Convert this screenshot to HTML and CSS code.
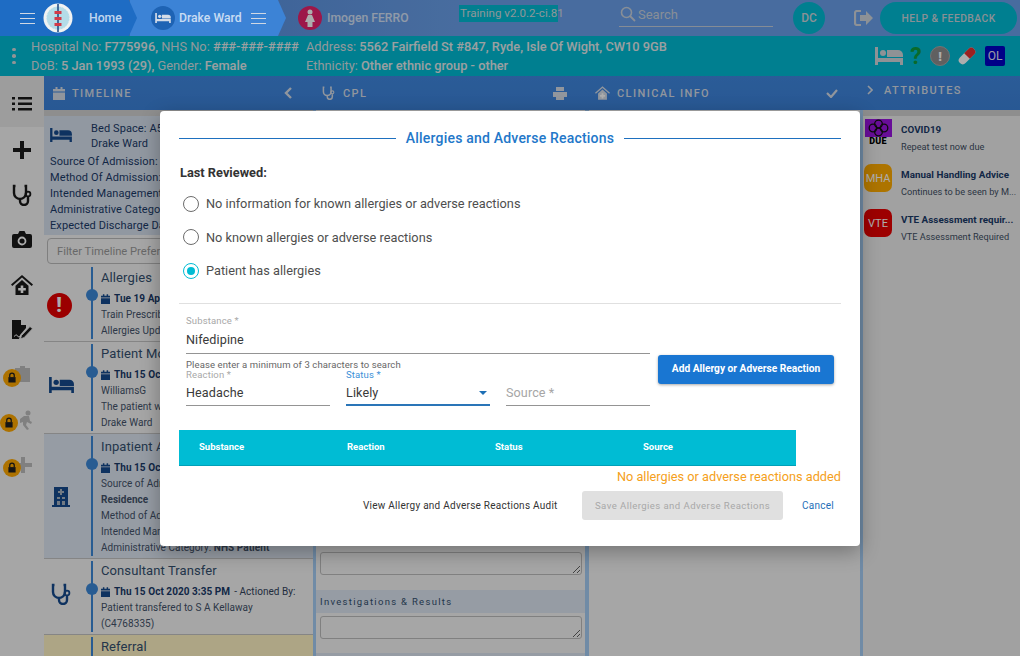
FILE: index.html
```html
<!DOCTYPE html>
<html lang="en">
<head>
<meta charset="utf-8">
<title>Allergies</title>
<link rel="stylesheet" href="styles.css">
</head>
<body>
<svg class="defs" width="0" height="0">
  <defs>
    <symbol id="bed" viewBox="0 0 28 18"><path d="M0 0h3v11h25v7h-3v-3H3v3H0z" fill="currentColor"/><circle cx="8" cy="6" r="3" fill="currentColor"/><path d="M12 3h11a5 5 0 0 1 5 5v2H12z" fill="currentColor"/></symbol>
    <symbol id="steth" viewBox="0 0 20 22"><path d="M3.500 2H2v7a6 6 0 0 0 12 0V2h-1.500M8 15v2a4 4 0 0 0 8 0v-4" fill="none" stroke="currentColor" stroke-width="2.400"/><circle cx="16" cy="10" r="2.400" fill="none" stroke="currentColor" stroke-width="1.800"/></symbol>
    <symbol id="cal" viewBox="0 0 12 13"><path d="M0 2h2.500V0h2v2h3V0h2v2H12v2.500H0zM0 5.500h12V13H0z" fill="currentColor"/></symbol>
    <symbol id="lock" viewBox="0 0 20 20"><circle cx="10" cy="10" r="10" fill="currentColor"/><path d="M6 9h8v6H6z" fill="#1f1f1f"/><path d="M7.500 9V7a2.500 2.500 0 0 1 5 0v2" fill="none" stroke="#1f1f1f" stroke-width="1.400"/></symbol>
    <symbol id="homeplus" viewBox="0 0 22 20"><path d="M11 0 0 9.500l1.300 1.500L11 2.600 20.700 11 22 9.500z" fill="currentColor"/><path d="M11 5 4.500 10.800V20h13v-9.200z" fill="currentColor"/><path d="M9.700 10.500h2.600v2.500h2.500v2.600h-2.500v2.500H9.700v-2.500H7.200V13h2.500z" fill="#fff"/></symbol>
  </defs>
</svg>

<div class="app">
  <header class="topbar">
    <nav class="crumbs">
      <div class="crumb crumb-home">
        <span class="burger"><i></i><i></i><i></i></span>
        <svg class="logo" viewBox="0 0 30 30"><circle cx="15" cy="15" r="14.500" fill="#f0f2f2"/><circle cx="15" cy="15" r="11.500" fill="#b4dce8"/><circle cx="15" cy="15" r="11.500" fill="none" stroke="#e8f2f5" stroke-width="1" stroke-dasharray="1 2"/><path d="M15 1v28" stroke="#234e86" stroke-width="1.600"/><path d="M11.500 8h7v3h-7zM11.500 14h7v3h-7zM11.500 20h7v3h-7z" fill="#d23a48"/></svg>
        <span class="crumb-text">Home</span>
      </div>
      <div class="crumb crumb-ward">
        <span class="crumb-icon"><svg width="16" height="10"><use href="#bed"/></svg></span>
        <span class="crumb-text">Drake Ward</span>
        <span class="burger burger-ward"><i></i><i></i><i></i></span>
      </div>
      <div class="crumb crumb-patient">
        <span class="crumb-icon crumb-icon-red"><svg width="12" height="18" viewBox="0 0 12 18"><circle cx="6" cy="3" r="2.500" fill="#fff"/><path d="M4 6h4l3 7H8.500v5h-5v-5H1z" fill="#fff"/></svg></span>
        <span class="crumb-text">Imogen FERRO</span>
      </div>
    </nav>
    <span class="version">Training v2.0.2-ci.81</span>
    <div class="search">
      <svg width="16" height="16" viewBox="0 0 16 16"><circle cx="6.500" cy="6.500" r="5" fill="none" stroke="currentColor" stroke-width="1.600"/><path d="m10 10 5 5" stroke="currentColor" stroke-width="1.800"/></svg>
      <span>Search</span>
    </div>
    <span class="avatar">DC</span>
    <svg class="logout" width="20" height="16" viewBox="0 0 20 16"><path d="M7 1H3a2 2 0 0 0-2 2v10a2 2 0 0 0 2 2h4" fill="none" stroke="currentColor" stroke-width="2.200"/><path d="M12 1l7 7-7 7v-4H6V5h6z" fill="currentColor"/></svg>
    <span class="help">HELP &amp; FEEDBACK</span>
  </header>

  <section class="patient">
    <span class="kebab"><i></i><i></i><i></i></span>
    <div class="patient-col patient-col-a">
      <p>Hospital No: <b>F775996,</b> NHS No: <b>###-###-####</b></p>
      <p>DoB: <b>5 Jan 1993 (29),</b> Gender: <b>Female</b></p>
    </div>
    <div class="patient-col">
      <p>Address: <b>5562 Fairfield St #847, Ryde, Isle Of Wight, CW10 9GB</b></p>
      <p>Ethnicity: <b>Other ethnic group - other</b></p>
    </div>
    <div class="patient-icons">
      <svg class="pi-bed" width="28" height="18"><use href="#bed"/></svg>
      <span class="pi-q">?</span>
      <span class="pi-alert">!</span>
      <svg width="20" height="20" viewBox="0 0 20 20"><g transform="rotate(-45 10 10)"><rect x="0" y="6" width="20" height="8" rx="4" fill="#fff"/><path d="M10 6h6a4 4 0 0 1 0 8h-6z" fill="#e53030"/></g></svg>
      <span class="pi-ol">OL</span>
    </div>
  </section>

  <main class="workspace">
    <aside class="rail">
      <div class="rail-item rail-active"><svg width="20" height="16" viewBox="0 0 20 16"><path d="M0 1h3v2.500H0zM6 1h14v2.500H6zM0 6.500h3V9H0zM6 6.500h14V9H6zM0 12h3v2.500H0zM6 12h14v2.500H6z" fill="currentColor"/></svg></div>
      <div class="rail-item"><svg width="20" height="20" viewBox="0 0 20 20"><path d="M8 1h4v7h7v4h-7v7H8v-7H1V8h7z" fill="currentColor"/></svg></div>
      <div class="rail-item"><svg width="20" height="22"><use href="#steth"/></svg></div>
      <div class="rail-item"><svg width="20" height="17" viewBox="0 0 20 17"><path d="M2 3h4l1.500-3h5L14 3h4a2 2 0 0 1 2 2v10a2 2 0 0 1-2 2H2a2 2 0 0 1-2-2V5a2 2 0 0 1 2-2z" fill="currentColor"/><circle cx="10" cy="10" r="3.500" fill="none" stroke="#fff" stroke-width="1.800"/></svg></div>
      <div class="rail-item"><svg width="22" height="20"><use href="#homeplus"/></svg></div>
      <div class="rail-item"><svg width="22" height="20" viewBox="0 0 22 20"><path d="M1 0h9v5h5v3l-6 7-1 4H1z" fill="currentColor"/><path d="M3 16.500c2-2 3-2 3.500-.5s2 .5 3 0" fill="none" stroke="#fff" stroke-width="1"/><path d="m10.500 15.500 8.500-9 2.500 2.200-8.500 9-3.500 1z" fill="currentColor" stroke="#fff" stroke-width=".8"/></svg></div>
      <div class="rail-item"><svg class="ghost" width="20" height="20" viewBox="0 0 20 20"><path d="M2 3h5V1h5v2h5v14H2z" fill="currentColor"/></svg><svg class="lock" width="18" height="18"><use href="#lock"/></svg></div>
      <div class="rail-item"><svg class="ghost" width="20" height="20" viewBox="0 0 20 20"><circle cx="15" cy="3" r="2.500" fill="currentColor"/><path d="M11 6h5l1 5 2 1-1 2-4-2-1 3 3 4-2 1-4-5v-3l-3 1 0-4z" fill="currentColor"/></svg><svg class="lock lock-left" width="18" height="18"><use href="#lock"/></svg></div>
      <div class="rail-item"><svg class="ghost" width="20" height="20" viewBox="0 0 20 20"><path d="M8 2h4v6h7v4h-7v6H8v-6H2V8h6z" fill="currentColor"/></svg><svg class="lock" width="18" height="18"><use href="#lock"/></svg></div>
    </aside>

    <div class="panels">
      <section class="panel panel-timeline">
        <div class="panel-head">
          <svg class="ph-icon" width="12" height="13"><use href="#cal"/></svg>
          <span class="ph-title">TIMELINE</span>
          <svg class="ph-end" width="9" height="12" viewBox="0 0 9 12"><path d="M7 1 2 6l5 5" fill="none" stroke="currentColor" stroke-width="2.400"/></svg>
        </div>
        <div class="bed-info">
          <div class="bed-top">
            <svg class="bed-icon" width="22" height="14"><use href="#bed"/></svg>
            <div><p>Bed Space: A5</p><p>Drake Ward</p></div>
          </div>
          <p>Source Of Admission: Residence</p>
          <p>Method Of Admission: Emergency</p>
          <p>Intended Management: Inpatient</p>
          <p>Administrative Category: NHS Patient</p>
          <p>Expected Discharge Date:</p>
        </div>
        <div class="filter">Filter Timeline Preferences</div>
        <ul class="events">
          <li class="event event-a">
            <span class="ev-icon"><span class="ev-alert">!</span></span>
            <span class="ev-dot"></span>
            <div class="ev-body">
              <h3>Allergies</h3>
              <p class="ev-date"><svg width="9" height="10"><use href="#cal"/></svg><b>Tue 19 Apr 2022</b></p>
              <p>Train Prescriber</p>
              <p>Allergies Updated</p>
            </div>
          </li>
          <li class="event event-b">
            <span class="ev-icon"><svg width="25" height="16"><use href="#bed"/></svg></span>
            <span class="ev-dot"></span>
            <div class="ev-body">
              <h3>Patient Moved</h3>
              <p class="ev-date"><svg width="9" height="10"><use href="#cal"/></svg><b>Thu 15 Oct 2020</b></p>
              <p>WilliamsG</p>
              <p>The patient was moved</p>
              <p>Drake Ward</p>
            </div>
          </li>
          <li class="event event-c">
            <span class="ev-icon"><svg width="18" height="21" viewBox="0 0 18 21"><path d="M2 1h14v18h2v2H0v-2h2z" fill="currentColor"/><path d="M8 3h2v2h2v2h-2v2H8V7H6V5h2zM5 11h3v2H5zM10 11h3v2h-3zM5 15h3v4H5zM10 15h3v4h-3z" fill="#a9b4c2"/></svg></span>
            <span class="ev-dot"></span>
            <div class="ev-body">
              <h3>Inpatient Admission</h3>
              <p class="ev-date"><svg width="9" height="10"><use href="#cal"/></svg><b>Thu 15 Oct 2020</b></p>
              <p>Source of Admission: Usual Place of</p>
              <p><b>Residence</b></p>
              <p>Method of Admission: Emergency</p>
              <p>Intended Management: Inpatient</p>
              <p>Administrative Category: <b>NHS Patient</b></p>
            </div>
          </li>
          <li class="event event-d">
            <span class="ev-icon"><svg width="20" height="22"><use href="#steth"/></svg></span>
            <span class="ev-dot"></span>
            <div class="ev-body">
              <h3>Consultant Transfer</h3>
              <p class="ev-date"><svg width="9" height="10"><use href="#cal"/></svg><b>Thu 15 Oct 2020 3:35 PM</b> - Actioned By:</p>
              <p>Patient transfered to S A Kellaway</p>
              <p>(C4768335)</p>
            </div>
          </li>
          <li class="event event-e">
            <div class="ev-body"><h3>Referral</h3></div>
          </li>
        </ul>
      </section>

      <section class="panel panel-cpl">
        <div class="panel-head">
          <svg class="ph-icon" width="13" height="14"><use href="#steth"/></svg>
          <span class="ph-title">CPL</span>
          <svg class="ph-end" width="14" height="13" viewBox="0 0 14 13"><path d="M3 0h8v4H3zM0 5h14v5h-3v3H3v-3H0z" fill="currentColor"/></svg>
        </div>
        <div class="cpl-body">
          <textarea class="area" aria-label="Notes"></textarea>
          <h4>Investigations &amp; Results</h4>
          <textarea class="area" aria-label="Investigations and results"></textarea>
          <div class="cpl-strip"></div>
        </div>
      </section>

      <section class="panel panel-info">
        <div class="panel-head">
          <svg class="ph-icon" width="15" height="14"><use href="#homeplus"/></svg>
          <span class="ph-title">CLINICAL INFO</span>
          <svg class="ph-end" width="12" height="9" viewBox="0 0 12 9"><path d="m1 4 4 4 6-7" fill="none" stroke="currentColor" stroke-width="2.200"/></svg>
        </div>
      </section>

      <section class="panel panel-attr">
        <div class="panel-head panel-head-attr">
          <svg width="6" height="10" viewBox="0 0 6 10"><path d="m1 1 4 4-4 4" fill="none" stroke="currentColor" stroke-width="1.600"/></svg>
          <span class="ph-title">ATTRIBUTES</span>
        </div>
        <ul class="attrs">
          <li class="attr">
            <span class="covid"><svg width="27" height="18" viewBox="0 0 27 18"><rect width="27" height="18" fill="#9a14e0"/><g fill="none" stroke="#111" stroke-width="1.300"><circle cx="13.500" cy="5" r="3.800"/><circle cx="8" cy="9" r="3.800"/><circle cx="19" cy="9" r="3.800"/><circle cx="13.500" cy="13" r="3.800"/></g></svg><b>DUE</b></span>
            <div><h5>COVID19</h5><p>Repeat test now due</p></div>
          </li>
          <li class="attr">
            <span class="badge badge-mha">MHA</span>
            <div><h5>Manual Handling Advice</h5><p>Continues to be seen by M...</p></div>
          </li>
          <li class="attr">
            <span class="badge badge-vte">VTE</span>
            <div><h5>VTE Assessment requir...</h5><p>VTE Assessment Required</p></div>
          </li>
        </ul>
      </section>
    </div>
  </main>
</div>

<div class="backdrop"></div>

<div class="modal">
  <div class="modal-title"><span>Allergies and Adverse Reactions</span></div>
  <p class="reviewed">Last Reviewed:</p>
  <div class="radios">
    <label class="radio"><i class="radio-mark"></i>No information for known allergies or adverse reactions</label>
    <label class="radio"><i class="radio-mark"></i>No known allergies or adverse reactions</label>
    <label class="radio"><i class="radio-mark radio-on"></i>Patient has allergies</label>
  </div>
  <hr class="rule">
  <div class="form">
    <div class="form-fields">
      <div class="field field-wide">
        <span class="field-label">Substance *</span>
        <span class="field-value">Nifedipine</span>
      </div>
      <p class="hint">Please enter a minimum of 3 characters to search</p>
      <div class="field-row">
        <div class="field">
          <span class="field-label">Reaction *</span>
          <span class="field-value">Headache</span>
        </div>
        <div class="field field-focus">
          <span class="field-label">Status *</span>
          <span class="field-value">Likely<i class="caret"></i></span>
        </div>
        <div class="field">
          <span class="field-label">&nbsp;</span>
          <span class="field-value field-ph">Source *</span>
        </div>
      </div>
    </div>
    <button class="btn-add" type="button">Add Allergy or Adverse Reaction</button>
  </div>
  <div class="table-head"><span>Substance</span><span>Reaction</span><span>Status</span><span>Source</span></div>
  <p class="empty">No allergies or adverse reactions added</p>
  <div class="actions">
    <span class="audit">View Allergy and Adverse Reactions Audit</span>
    <button class="btn-save" type="button">Save Allergies and Adverse Reactions</button>
    <span class="cancel">Cancel</span>
  </div>
</div>
</body>
</html>
```

FILE: styles.css
```css
* { box-sizing: border-box; }
html, body { margin: 0; padding: 0; height: 100%; overflow: hidden; }
body { font-family: Roboto, "Liberation Sans", sans-serif; color: #333; background: #f5f5f5; }
p, h3, h4, h5, ul { margin: 0; padding: 0; }
ul { list-style: none; }
.defs { position: absolute; }

.app { display: flex; flex-direction: column; height: 656px; width: 1020px; }

/* Top bar */
.topbar { height: 36px; flex: none; background: #6aa0ea; color: #fff; display: flex; align-items: center; position: relative; }
.crumbs { display: flex; height: 36px; width: 449px; flex: none; }
.crumb { display: flex; align-items: center; height: 36px; font-size: 12.200px; font-weight: 500; flex: none; }
.crumb-text { opacity: .72; white-space: nowrap; }
.crumb-home { width: 137px; background: #1e6cc4; clip-path: polygon(0 0, 129px 0, 137px 18px, 129px 36px, 0 36px); padding-left: 20px; position: relative; z-index: 3; margin-right: -7px; }
.crumb-ward { width: 156px; background: #3c83d6; clip-path: polygon(0 0, 148px 0, 156px 18px, 148px 36px, 0 36px); padding-left: 21px; position: relative; z-index: 2; margin-right: -10px; }
.crumb-patient { width: 180px; padding-left: 22px; background: linear-gradient(90deg, #5e95e2, #6aa0ea); }
.burger { display: flex; flex-direction: column; gap: 4px; width: 15px; flex: none; }
.burger i { display: block; height: 1px; background: #d0d8e4; }
.burger-ward { margin-left: 9px; }
.logo { width: 30px; height: 30px; margin-left: 8px; margin-right: 16px; flex: none; }
.crumb-icon { width: 24px; height: 24px; border-radius: 50%; background: #1e63b4; display: flex; align-items: center; justify-content: center; margin-right: 4px; flex: none; color: #d4dce8; }
.crumb-icon-red { background: #e8236c; margin-right: 5px; }
.version { background: #00bcd4; color: #d2dde2; font-size: 11.600px; line-height: 17px; height: 17px; padding: 0 0 0 1px; width: 99px; white-space: nowrap; align-self: flex-start; margin-top: 5px; margin-left: 10px; }
.search { width: 154px; margin-left: 61px; height: 27px; align-self: flex-start; border-bottom: 1px solid #c5cfdd; display: flex; align-items: center; gap: 2px; padding-top: 2px; padding-left: 1px; font-size: 13px; color: #c9d2df; font-weight: 400; }
.avatar { width: 32px; height: 32px; border-radius: 50%; background: #00bcd4; display: flex; align-items: center; justify-content: center; font-size: 12px; font-weight: 500; color: #cdd6dd; margin-left: 20px; flex: none; }
.logout { margin-left: 29px; color: #d0d6de; flex: none; }
.help { width: 137px; height: 32px; border-radius: 16px; background: #00bcd4; display: flex; align-items: center; justify-content: center; font-size: 10.300px; font-weight: 500; letter-spacing: .45px; color: #cbd5dc; margin-left: 6px; flex: none; }

/* Patient bar */
.patient { height: 40px; flex: none; background: #00bcd4; color: #d8e0e6; display: flex; align-items: center; font-size: 12.800px; position: relative; }
.patient b { font-weight: 500; color: #e6ebee; }
.patient p { height: 19px; line-height: 19px; white-space: nowrap; }
.kebab { display: flex; flex-direction: column; gap: 3px; width: 31px; padding-left: 12px; flex: none; }
.kebab i { display: block; width: 3.500px; height: 3.500px; border-radius: 50%; background: #d4dade; }
.patient-col-a { width: 275px; flex: none; }
.patient-icons { margin-left: auto; display: flex; align-items: center; gap: 6px; padding-right: 15px; color: #d3d8dc; }
.pi-bed { color: #d3d8dc; }
.pi-q { color: #0f9d3f; font-size: 23px; font-weight: 700; width: 14px; text-align: center; line-height: 1; }
.pi-alert { width: 20px; height: 20px; border-radius: 50%; background: #8e8e8e; border: 1px solid #aaa; color: #fff; display: flex; align-items: center; justify-content: center; font-weight: 900; font-size: 13px; margin: 0 1px 0 1px; }
.pi-ol { width: 20px; height: 20px; background: #0000c8; color: #e4e6f5; font-size: 12px; display: flex; align-items: center; justify-content: center; border-radius: 2px; margin-left: 2px; }

/* Workspace */
.workspace { flex: 1; display: flex; min-height: 0; }
.rail { width: 44px; flex: none; background: #f5f5f5; display: flex; flex-direction: column; }
.rail-item { height: 45px; display: flex; align-items: center; justify-content: center; position: relative; color: #1a1a1a; flex: none; }
.rail-active { height: 51px; background: #e8e8e8; padding-top: 5px; }
.ghost { color: #bdbdbd; margin-left: 2px; }
.lock { position: absolute; left: 3px; top: 17px; color: #ffa800; }
.lock-left { left: 0; }

.panels { flex: 1; display: flex; min-width: 0; }
.panel { display: flex; flex-direction: column; min-width: 0; position: relative; }
.panel-timeline { width: 269px; flex: none; }
.panel-cpl { width: 276px; flex: none; border-left: 3px solid #a6cdf5; border-right: 4px solid #a6cdf5; }
.panel-info { width: 271px; flex: none; }
.panel-attr { flex: 1; border-left: 3px solid #a6cdf5; background: #eeeeee; }

.panel-head { height: 34px; flex: none; background: linear-gradient(#4088e0, #3c82da); color: #d6dde8; display: flex; align-items: center; font-size: 11px; letter-spacing: 1.400px; font-weight: 500; padding: 0 20px 0 9px; position: relative; }
.ph-icon { flex: none; margin-right: 7px; }
.ph-title { white-space: nowrap; }
.ph-end { margin-left: auto; flex: none; }
.panel-cpl .panel-head { margin: 0 -4px 0 -3px; padding: 0 22px 0 9px; }
.panel-cpl .ph-icon { margin-right: 8px; }
.panel-info .panel-head { padding: 0 22px 0 6px; }
.panel-attr .panel-head { margin-left: -3px; }
.panel-head-attr { padding: 0 0 6px 7px; gap: 11px; }

.bed-info { background: #d6e0ee; border-top: 6px solid #d2d2d2; height: 125px; padding: 5px 6px 0; font-size: 11px; letter-spacing: .1px; color: #1a3a68; line-height: 16px; white-space: nowrap; overflow: hidden; flex: none; }
.bed-top { display: flex; align-items: center; gap: 19px; padding-bottom: 3px; }
.bed-top p { line-height: 15px; }
.bed-icon { color: #164b8e; margin-top: -2px; }
.filter { margin: 3px 0 0 3px; height: 26px; border: 1px solid #bcbcbc; border-radius: 4px; font-size: 11.200px; line-height: 24px; color: #9a9a9a; padding: 1px 0 0 9px; white-space: nowrap; flex: none; width: 262px; }

.events { flex: 1; overflow: hidden; margin-top: 1px; }
.event { display: flex; position: relative; border-bottom: 1px solid #c4c4c4; padding: 1px 0 0 57px; color: #44536a; font-size: 10px; letter-spacing: .05px; line-height: 16px; }
.event::before { content: ""; position: absolute; left: 47px; top: 2px; bottom: 2px; width: 2px; background: #3c88d8; }
.event-a { height: 77px; padding-top: 2px; }
.event-b { height: 92px; }
.event-c { height: 125px; background: #dde6f2; padding-top: 2px; }
.event-d { height: 76px; }
.event-e { height: 40px; background: #fff3c4; border-bottom: 0; }
.ev-body { flex: 1; white-space: nowrap; overflow: hidden; }
.ev-body h3 { font-size: 13px; font-weight: 400; letter-spacing: .1px; color: #34506f; line-height: 22px; margin-bottom: 2px; }
.ev-date { display: flex; align-items: center; gap: 4px; color: #33445c; }
.ev-date svg { color: #164b8e; flex: none; }
.ev-date b { font-weight: 700; color: #1a3a68; }
.ev-dot { position: absolute; left: 42px; top: 24px; width: 12px; height: 12px; border-radius: 50%; background: #3c88d8; }
.ev-icon { position: absolute; left: 0; width: 34px; top: 0; bottom: 0; display: flex; align-items: center; justify-content: center; color: #164b8e; }
.ev-alert { width: 25px; height: 25px; border-radius: 50%; background: #e50000; color: #fff; display: flex; align-items: center; justify-content: center; font-weight: 900; font-size: 20px; margin-left: -4px; }
.event-a .ev-icon { padding-top: 4px; }
.event-b .ev-icon { padding-bottom: 6px; }
.event-d .ev-icon { padding-bottom: 6px; }

.cpl-body { flex: 1; padding-top: 442px; display: flex; flex-direction: column; }
.area { display: block; height: 23px; min-height: 23px; margin: 0 0 0 4px; border: 1px solid #bdbdbd; border-radius: 3px; width: 262px; background: #f5f5f5; padding: 0; outline: 0; flex: none; }
.cpl-body h4 { height: 23px; margin: 15px 0 3px; background: #dde6f2; font-size: 9.500px; letter-spacing: 1.300px; font-weight: 400; color: #34506f; line-height: 23px; padding-left: 4px; white-space: nowrap; flex: none; }
.cpl-strip { height: 10px; margin-top: 14px; background: #dde6f2; flex: none; }

.attrs { padding: 15px 0 0 1px; position: relative; }
.attrs::before { content: ""; position: absolute; left: 0; right: 0; top: 0; height: 6px; background: #d2d2d2; }
.attr { display: flex; gap: 9px; height: 45px; align-items: flex-start; margin-top: -6px; margin-bottom: 6px; }
.attr h5 { font-size: 9.800px; font-weight: 700; letter-spacing: .05px; color: #1a3a68; line-height: 14px; white-space: nowrap; }
.attr p { font-size: 9.200px; color: #3f4f64; line-height: 13px; margin-top: 3px; white-space: nowrap; }
.attr > div { padding-top: 4px; }
.badge { width: 28px; height: 28px; border-radius: 7px; color: #fff; font-size: 11px; display: flex; align-items: center; justify-content: center; flex: none; }
.badge-mha { background: #ffab00; }
.badge-vte { background: #e80000; }
.covid { width: 28px; display: flex; flex-direction: column; align-items: center; flex: none; line-height: 8px; font-size: 9px; color: #000; }
.covid b { font-weight: 900; letter-spacing: .2px; }

/* Modal */
.backdrop { position: absolute; inset: 0; background: rgba(0, 0, 0, .32); }
.modal { position: absolute; left: 160px; top: 111px; width: 700px; height: 435px; background: #fff; border-radius: 4px; padding: 19px 19px 0; box-shadow: 0 6px 20px rgba(0,0,0,.3); }
.modal-title { display: flex; align-items: center; gap: 10px; font-size: 14px; font-weight: 500; letter-spacing: .2px; color: #2277c9; line-height: 17px; height: 17px; }
.modal-title::before, .modal-title::after { content: ""; flex: 1; height: 1px; background: #1e70bf; }
.reviewed { margin-top: 18px; font-size: 12.800px; font-weight: 700; color: #333; line-height: 16px; padding-left: 1px; }
.radios { margin-top: 6px; display: flex; flex-direction: column; }
.radio { display: flex; align-items: center; height: 33.500px; font-size: 12.750px; color: #4e4e4e; padding-left: 4px; }
.radio-mark { width: 16px; height: 16px; border: 1px solid #6c6c6c; border-radius: 50%; margin-right: 7px; flex: none; position: relative; }
.radio-on { border-color: #00bcd4; }
.radio-on::after { content: ""; position: absolute; left: 3px; top: 3px; width: 8px; height: 8px; background: #00bcd4; border-radius: 50%; }
.rule { margin: 15px 0 0; border: 0; border-top: 1px solid #e0e0e0; height: 0; }
.form { display: flex; padding: 11px 0 0 7px; gap: 8px; }
.form-fields { width: 464px; flex: none; }
.field { display: flex; flex-direction: column; width: 144px; border-bottom: 1px solid #949494; height: 37px; }
.field-wide { width: 464px; height: 39px; }
.field-label { font-size: 9.500px; line-height: 12px; color: #a8a8a8; letter-spacing: .15px; height: 12px; }
.field-value { font-size: 12.600px; line-height: 18px; margin-top: 3px; color: #3a3a3a; display: flex; align-items: center; justify-content: space-between; letter-spacing: .1px; }
.field-wide .field-value { margin-top: 4px; }
.field-ph { color: #a6a6a6; }
.field-focus { border-bottom: 2px solid #2a75b8; }
.field-focus .field-label { color: #3b90d8; }
.caret { width: 0; height: 0; border-left: 4px solid transparent; border-right: 4px solid transparent; border-top: 4px solid #1d6fb5; margin-right: 3px; }
.hint { font-size: 9.500px; line-height: 12px; color: #666; margin-top: 5px; height: 10px; letter-spacing: .1px; position: relative; z-index: 1; }
.field-row { display: flex; gap: 16px; height: 37px; }
.btn-add { width: 176px; height: 29px; margin-top: 40px; border: 0; border-radius: 3px; background: #1976d2; color: #fff; font: 700 10.200px Roboto, sans-serif; box-shadow: 0 1px 3px rgba(0,0,0,.35); padding: 0 0 2px; flex: none; }
.table-head { margin-top: 24px; width: 617px; height: 36px; background: #00bcd4; border-bottom: 1px solid #00a0b8; display: flex; padding: 0 0 2px 20px; align-items: center; color: #fff; font-size: 9.500px; font-weight: 700; }
.table-head span { width: 148px; }
.empty { margin-top: 2px; text-align: right; font-size: 12.750px; line-height: 18px; color: #f5a020; height: 18px; }
.actions { display: flex; align-items: center; margin-top: 5px; height: 29px; padding-left: 184px; }
.audit { font-size: 10px; color: #333; letter-spacing: .25px; white-space: nowrap; width: 219px; }
.btn-save { width: 201px; height: 29px; border: 0; border-radius: 3px; background: #e0e0e0; color: #a8a8a8; font: 400 9.600px Roboto, sans-serif; letter-spacing: .42px; padding: 0; flex: none; }
.cancel { margin-left: 19px; font-size: 10px; color: #1e6fb8; letter-spacing: .25px; }
```
